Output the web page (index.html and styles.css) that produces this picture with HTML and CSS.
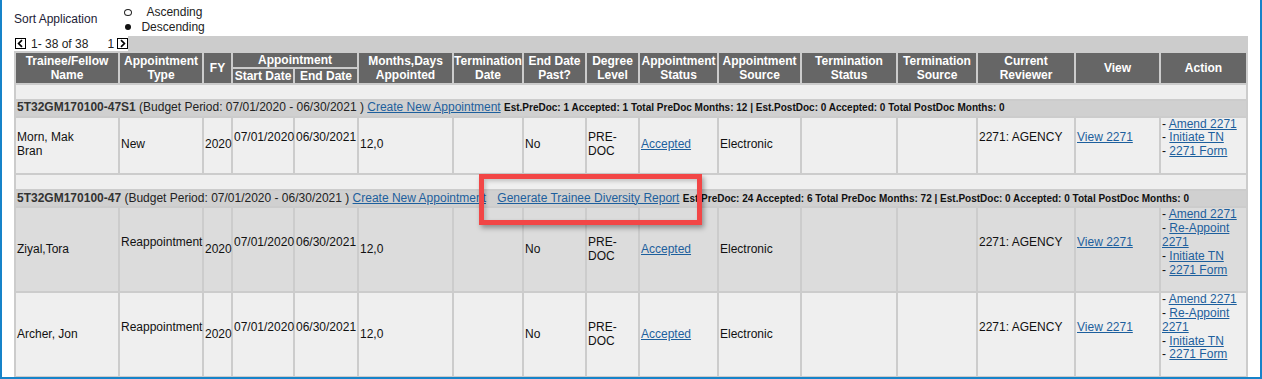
FILE: index.html
```html
<!DOCTYPE html>
<html lang="en">
<head>
    <meta charset="UTF-8">
    <title>Appointments</title>
    <link rel="stylesheet" href="styles.css">
</head>
<body>
<div class="frame">
    <div class="sort">
        <span class="sort-label">Sort Application</span>
        <div class="sort-options">
            <div class="opt opt-asc"><span class="radio"></span>Ascending</div>
            <div class="opt opt-desc"><span class="radio on"></span>Descending</div>
        </div>
    </div>

    <div class="pager-bar">
        <div class="pager">
            <svg class="pg-btn" width="11" height="11" viewBox="0 0 11 11"><rect x="0.5" y="0.5" width="10" height="10" fill="#fff" stroke="#000"/><path d="M7 2.2 L3.6 5.5 L7 8.8" fill="none" stroke="#000" stroke-width="1.7"/></svg>
            <span class="pg-count">1- 38 of 38</span>
            <span class="pg-page">1</span>
            <svg class="pg-btn" width="11" height="11" viewBox="0 0 11 11"><rect x="0.5" y="0.5" width="10" height="10" fill="#fff" stroke="#000"/><path d="M4 2.2 L7.4 5.5 L4 8.8" fill="none" stroke="#000" stroke-width="1.7"/></svg>
        </div>
        <div class="pager-fill"></div>
    </div>

    <table class="grid">
        <colgroup>
            <col style="width:102px"><col style="width:82px"><col style="width:27px"><col style="width:60px">
            <col style="width:62px"><col style="width:93px"><col style="width:68px"><col style="width:61px">
            <col style="width:51px"><col style="width:77px"><col style="width:81px"><col style="width:94px">
            <col style="width:78px"><col style="width:96px"><col style="width:83px"><col style="width:85px">
        </colgroup>
        <thead>
            <tr>
                <th rowspan="2">Trainee/Fellow<br>Name</th>
                <th rowspan="2">Appointment<br>Type</th>
                <th rowspan="2">FY</th>
                <th colspan="2">Appointment</th>
                <th rowspan="2">Months,Days<br>Appointed</th>
                <th rowspan="2">Termination<br>Date</th>
                <th rowspan="2">End Date<br>Past?</th>
                <th rowspan="2">Degree<br>Level</th>
                <th rowspan="2">Appointment<br>Status</th>
                <th rowspan="2">Appointment<br>Source</th>
                <th rowspan="2">Termination<br>Status</th>
                <th rowspan="2">Termination<br>Source</th>
                <th rowspan="2">Current<br>Reviewer</th>
                <th rowspan="2">View</th>
                <th rowspan="2">Action</th>
            </tr>
            <tr>
                <th>Start Date</th>
                <th>End Date</th>
            </tr>
        </thead>
        <tbody>
            <tr class="spacer"><td colspan="16">&nbsp;</td></tr>
            <tr class="group">
                <td colspan="16"><b>5T32GM170100-47S1</b> (Budget Period: 07/01/2020 - 06/30/2021 ) <a href="#">Create New Appointment</a> <span class="stats">Est.PreDoc: 1 Accepted: 1 Total PreDoc Months: 12 | Est.PostDoc: 0 Accepted: 0 Total PostDoc Months: 0</span></td>
            </tr>
            <tr class="row light">
                <td>Morn, Mak<br>Bran</td>
                <td>New</td>
                <td>2020</td>
                <td class="lift">07/01/2020</td>
                <td class="lift">06/30/2021</td>
                <td>12,0</td>
                <td></td>
                <td>No</td>
                <td>PRE-<br>DOC</td>
                <td><a href="#">Accepted</a></td>
                <td>Electronic</td>
                <td></td>
                <td></td>
                <td class="lift">2271: AGENCY</td>
                <td class="lift"><a href="#">View 2271</a></td>
                <td class="lift">- <a href="#">Amend 2271</a><br>- <a href="#">Initiate TN</a><br>- <a href="#">2271 Form</a></td>
            </tr>
            <tr class="spacer"><td colspan="16">&nbsp;</td></tr>
            <tr class="group group-tall">
                <td colspan="16"><b>5T32GM170100-47</b> (Budget Period: 07/01/2020 - 06/30/2021 ) <a href="#">Create New Appointment</a> <a class="gen" href="#">Generate Trainee Diversity Report</a> <span class="stats">Est.PreDoc: 24 Accepted: 6 Total PreDoc Months: 72 | Est.PostDoc: 0 Accepted: 0 Total PostDoc Months: 0</span></td>
            </tr>
            <tr class="row dark">
                <td>Ziyal,Tora</td>
                <td class="lift">Reappointment</td>
                <td>2020</td>
                <td class="lift">07/01/2020</td>
                <td class="lift">06/30/2021</td>
                <td>12,0</td>
                <td></td>
                <td>No</td>
                <td>PRE-<br>DOC</td>
                <td><a href="#">Accepted</a></td>
                <td>Electronic</td>
                <td></td>
                <td></td>
                <td class="lift">2271: AGENCY</td>
                <td class="lift"><a href="#">View 2271</a></td>
                <td class="lift">- <a href="#">Amend 2271</a><br>- <a href="#">Re-Appoint</a><br><a href="#">2271</a><br>- <a href="#">Initiate TN</a><br>- <a href="#">2271 Form</a></td>
            </tr>
            <tr class="row light">
                <td>Archer, Jon</td>
                <td class="lift">Reappointment</td>
                <td>2020</td>
                <td class="lift">07/01/2020</td>
                <td class="lift">06/30/2021</td>
                <td>12,0</td>
                <td></td>
                <td>No</td>
                <td>PRE-<br>DOC</td>
                <td><a href="#">Accepted</a></td>
                <td>Electronic</td>
                <td></td>
                <td></td>
                <td class="lift">2271: AGENCY</td>
                <td class="lift"><a href="#">View 2271</a></td>
                <td class="lift">- <a href="#">Amend 2271</a><br>- <a href="#">Re-Appoint</a><br><a href="#">2271</a><br>- <a href="#">Initiate TN</a><br>- <a href="#">2271 Form</a></td>
            </tr>
        </tbody>
    </table>

    <div class="callout"></div>
</div>
</body>
</html>
```

FILE: styles.css
```css
body { margin: 0; font-family: "Liberation Sans", Arial, sans-serif; font-size: 12px; color: #111; }
a { color: #1d5f9d; text-decoration: underline; }

.frame { position: relative; width: 1262px; height: 379px; box-sizing: border-box; border: 2px solid #1783c9; border-top: 0; padding-left: 12px; overflow: hidden; background: #fff; }

.sort { display: flex; align-items: center; height: 36px; }
.sort-label { padding-top: 2px; color: #1c1c36; }
.sort-options { margin-left: 27px; margin-top: 3px; line-height: 15px; color: #222; }
.opt { display: flex; align-items: center; }
.radio { display: inline-block; box-sizing: border-box; border-radius: 50%; }
.opt-asc .radio { width: 8px; height: 7px; border: 1.5px solid #222; margin-right: 14px; }
.opt-desc .radio { width: 6px; height: 6px; background: #111; margin: 0 10px 0 1px; }

.pager-bar { display: flex; width: 1234px; height: 15px; }
.pager { display: flex; align-items: center; padding-left: 1px; color: #222; }
.pg-count { margin-left: 5px; }
.pg-page { margin-left: 19px; margin-right: 3px; }
.pager-fill { flex: 1; background: #ccc; }

.grid { table-layout: fixed; width: 1234px; border-spacing: 2px; background: #ccc; }
.grid th { background: #666; color: #fff; font-weight: bold; padding: 0; line-height: 14px; white-space: nowrap; text-align: center; }
.grid td { padding: 0 0 0 1px; line-height: 13.8px; text-align: left; vertical-align: middle; }
.spacer td { background: #efefef; }
.group td { background: #d0d0d0; color: #222; padding-bottom: 1px; }
.group b { color: #333; }
.group-tall td { padding: 1px 0 1px 1px; }
.gen { margin-left: 8px; }
.stats { font-size: 10px; font-weight: bold; color: #111; }
.row.light td { background: #efefef; }
.row.dark td { background: #dcdcdc; }
.grid td.lift { padding-bottom: 13.8px; }

.callout { position: absolute; left: 477px; top: 174px; width: 223px; height: 51px; box-sizing: border-box; border: 5px solid #f24646; box-shadow: 2px 3px 5px rgba(0,0,0,0.35), inset 2px 2px 4px rgba(0,0,0,0.2); }
```
